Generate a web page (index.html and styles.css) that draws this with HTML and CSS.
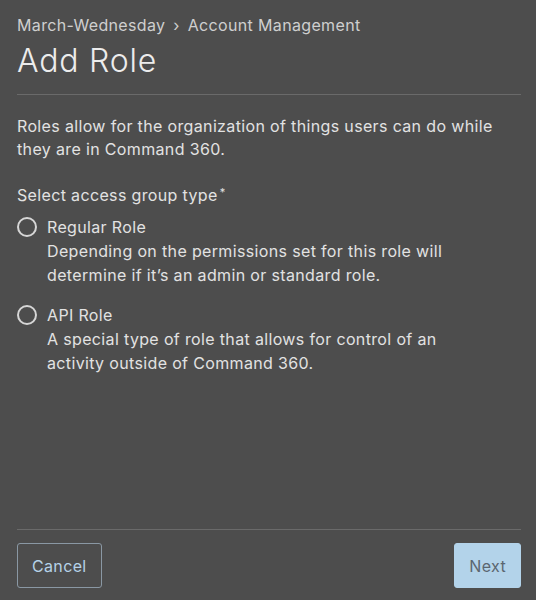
FILE: index.html
```html
<!DOCTYPE html>
<html lang="en">
<head>
<meta charset="utf-8">
<title>Add Role</title>
<link rel="stylesheet" href="styles.css">
</head>
<body>
<div class="page">
  <header class="header">
    <div class="breadcrumb">March-Wednesday <span class="sep">›</span> Account Management</div>
    <h1 class="title">Add Role</h1>
  </header>
  <main class="content">
    <p class="intro">Roles allow for the organization of things users can do while they are in Command 360.</p>
    <div class="group-label">Select access group type<span class="req">*</span></div>
    <div class="options">
      <label class="option">
        <span class="radio"></span>
        <span class="option-text">
          <span class="option-title">Regular Role</span>
          <span class="option-desc">Depending on the permissions set for this role will determine if it’s an admin or standard role.</span>
        </span>
      </label>
      <label class="option">
        <span class="radio"></span>
        <span class="option-text">
          <span class="option-title">API Role</span>
          <span class="option-desc">A special type of role that allows for control of an activity outside of Command 360.</span>
        </span>
      </label>
    </div>
  </main>
  <footer class="footer">
    <button class="btn btn-cancel" type="button">Cancel</button>
    <button class="btn btn-next" type="button">Next</button>
  </footer>
</div>
</body>
</html>
```

FILE: styles.css
```css
* { box-sizing: border-box; }
html, body {
  margin: 0;
  padding: 0;
  background: #4d4d4d;
}
body {
  font-family: Inter, "Noto Sans", "Liberation Sans", sans-serif;
  color: #e2e2e2;
  font-size: 16px;
  letter-spacing: 0.35px;
}
.page {
  height: 600px;
  display: flex;
  flex-direction: column;
  padding: 0 15px 0 17px;
}
.header {
  padding-top: 13px;
  padding-bottom: 13px;
  border-bottom: 1px solid #6a6a6a;
}
.breadcrumb {
  font-size: 16px;
  line-height: 24px;
  color: #cfcfcf;
}
.sep {
  margin: 0 3px;
}
.title {
  margin: 4px 0 0;
  font-size: 32px;
  line-height: 40px;
  font-weight: 300;
  letter-spacing: 0.8px;
  color: #ececec;
}
.content {
  flex: 1;
  padding-top: 20px;
  padding-right: 26px;
}
.intro {
  margin: 0;
  line-height: 23px;
}
.group-label {
  margin-top: 23px;
  line-height: 23px;
}
.req {
  font-size: 11px;
  vertical-align: top;
  margin-left: 2px;
  position: relative;
  top: -3px;
}
.options {
  margin-top: 8px;
  display: flex;
  flex-direction: column;
  gap: 16px;
}
.option {
  display: flex;
  gap: 10px;
  align-items: flex-start;
}
.radio {
  flex: none;
  width: 20px;
  height: 20px;
  border: 2px solid #d6d6d6;
  border-radius: 50%;
  margin-top: 2px;
}
.option-text {
  display: flex;
  flex-direction: column;
  line-height: 24px;
}
.footer {
  border-top: 1px solid #6a6a6a;
  padding: 13px 0 12px;
  display: flex;
  justify-content: space-between;
}
.btn {
  font-family: inherit;
  font-size: 16px;
  letter-spacing: 0.35px;
  height: 45px;
  border-radius: 3px;
  padding: 0 14px;
  cursor: pointer;
}
.btn-cancel {
  background: transparent;
  border: 1px solid #8a98a4;
  color: #b5d2e8;
}
.btn-next {
  background: #b3d3ea;
  border: 1px solid #b3d3ea;
  color: #5b6670;
}
```
